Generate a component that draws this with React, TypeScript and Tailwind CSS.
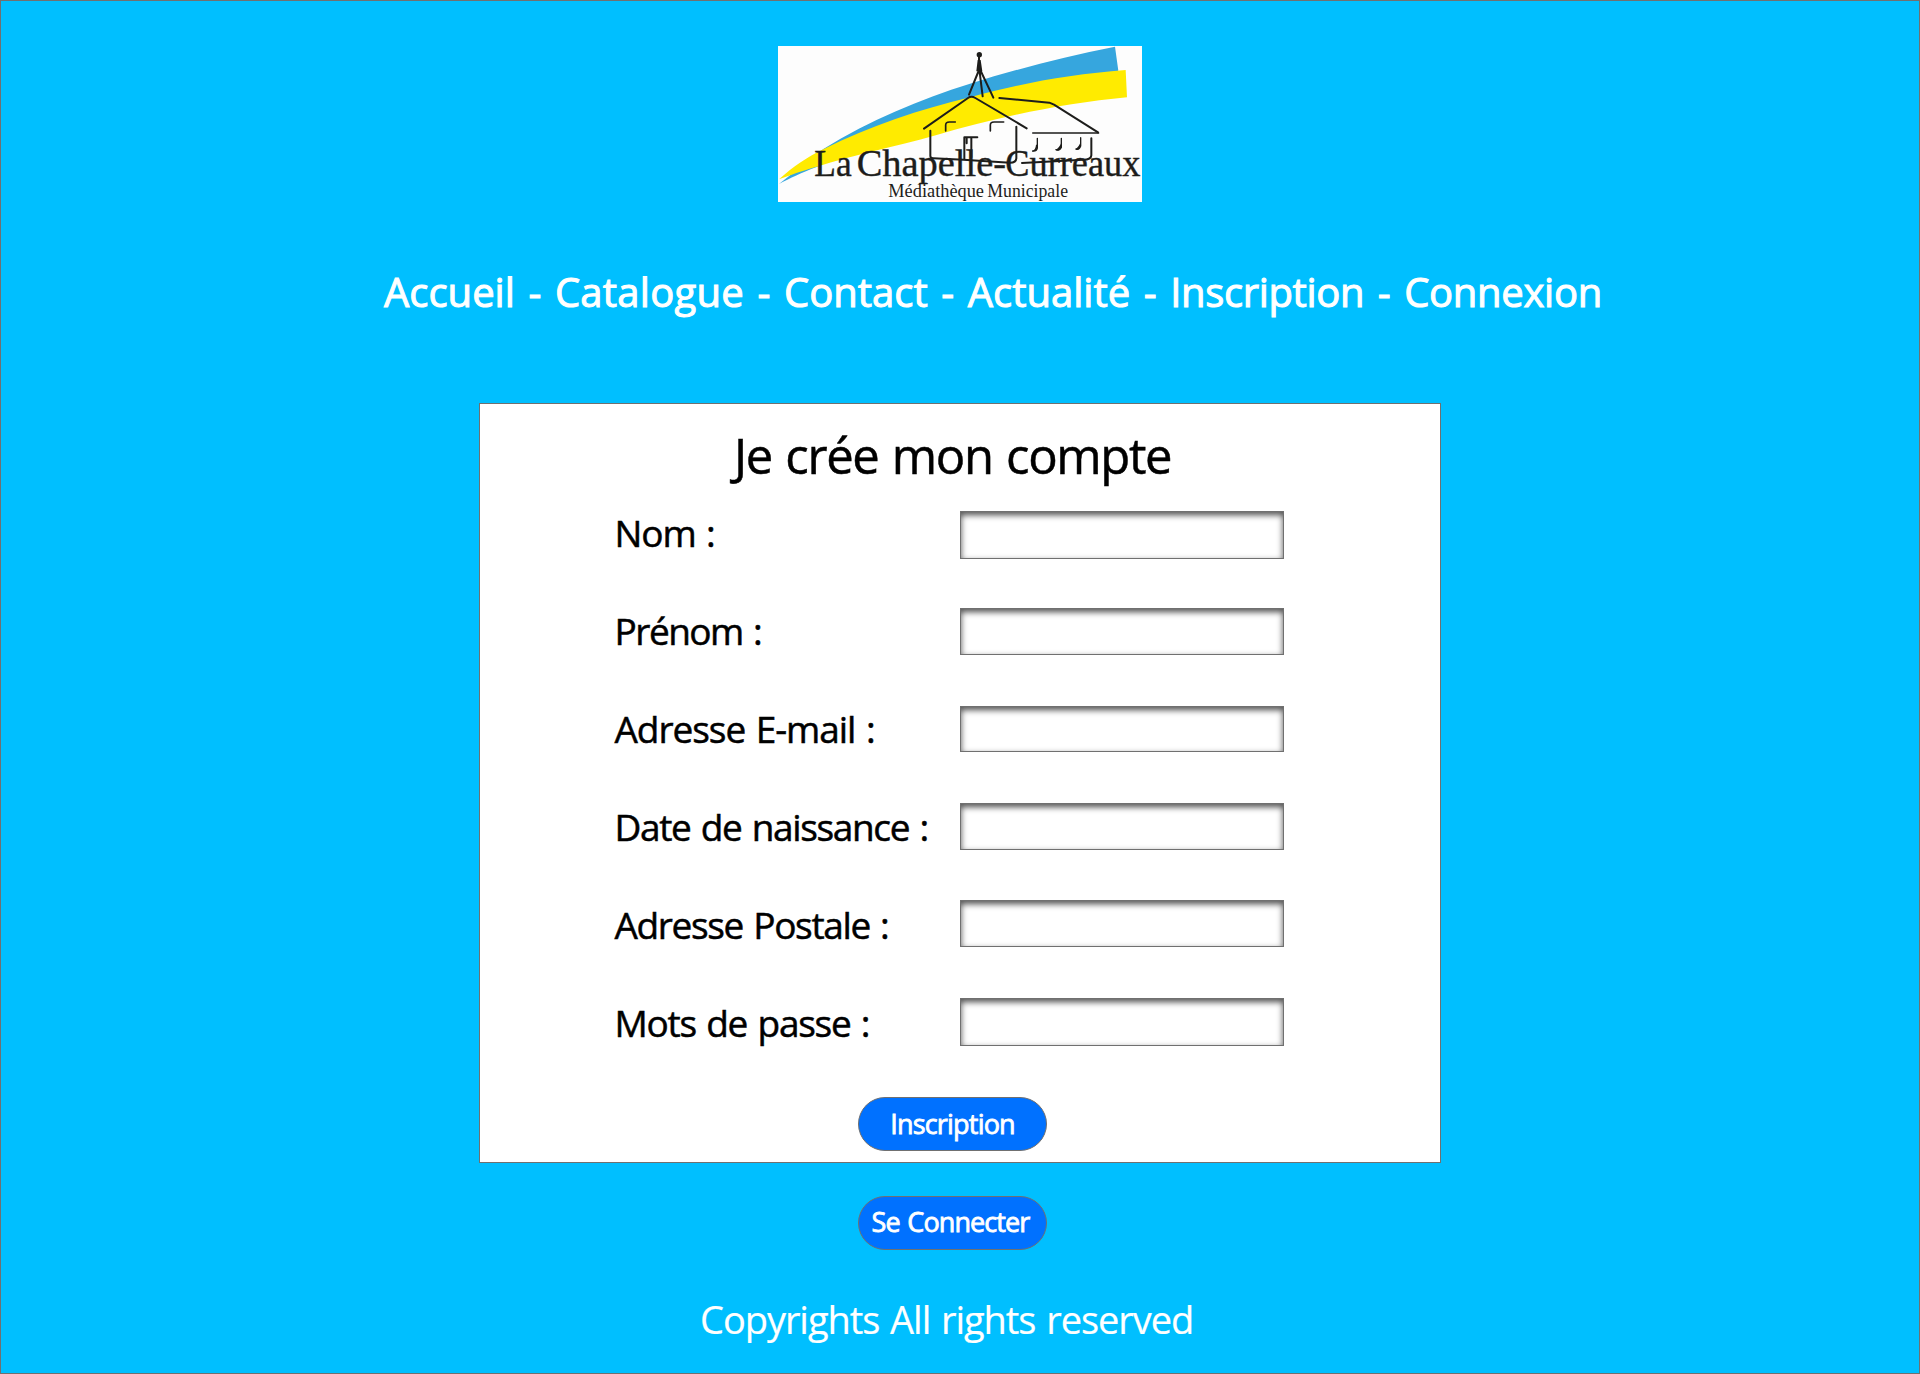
const links = [
  { label: "Accueil", track: "tracking-[0px]" },
  { label: "Catalogue", track: "tracking-[0.25px]" },
  { label: "Contact", track: "tracking-[0px]" },
  { label: "Actualité", track: "tracking-[0px]" },
  { label: "Inscription", track: "tracking-[-0.35px]" },
  { label: "Connexion", track: "tracking-[-0.3px]" },
];

const fields = [
  { label: "Nom :", size: "h-[48px] mb-[49px]", track: "tracking-[-1.1px] [word-spacing:2px]" },
  { label: "Prénom :", size: "h-[47px] mb-[51px]", track: "tracking-[-1.5px] [word-spacing:2px]" },
  { label: "Adresse E-mail :", size: "h-[46px] mb-[51px]", track: "tracking-[-1.05px] [word-spacing:2px]" },
  { label: "Date de naissance :", size: "h-[47px] mb-[50px]", track: "tracking-[-1.35px] [word-spacing:2px]" },
  { label: "Adresse Postale :", size: "h-[47px] mb-[51px]", track: "tracking-[-1.35px] [word-spacing:2px]" },
  { label: "Mots de passe :", size: "h-[48px]", track: "tracking-[-1.25px] [word-spacing:2px]" },
];

function Logo() {
  return (
    <svg width="364" height="156" viewBox="24 18 1092 468" className="block overflow-visible bg-[#fdfdfd]">
      <path d="M27 432 L160 327 C300 240 450 178 600 131 C740 88 880 50 1035 20 L1045 92 L400 260 L140 381 C95 398 60 415 27 432Z" fill="#36a6de" />
      <path d="M27 418 C70 380 110 352 160 328 C300 258 450 208 600 172 C750 130 900 103 1067 90 L1071 172 C880 190 680 232 500 285 C370 322 250 345 140 380 C95 393 60 405 27 418Z" fill="#ffeb00" />
      <g fill="none" stroke="#1d1d1b" strokeWidth="6" strokeLinecap="round" strokeLinejoin="round">
        <path d="M627 44 V90 L597 164 M628 88 L638 169 M628 84 L670 173" />
        <path d="M462 266 L594 174 Q604 167 616 174 L770 265" />
        <path d="M688 174 L838 188 L852 194 L984 277" />
        <path d="M788 279 H986" strokeWidth="4" />
        <path d="M481 272 V348 Q481 355 490 355 L580 359 L720 368 Q738 368 739 355 V260" />
        <path d="M756 369 L940 359 Q963 359 964 346 V295" />
        <path d="M527 273 V255 Q527 246 538 246 H556 M661 273 V255 Q661 246 672 246 H701" strokeWidth="5" />
        <path d="M583 357 V292 H622 M604 352 V294 M590 293 V310" strokeWidth="6" />
        <path d="M802 295 V324 Q800 334 788 333 M874 295 V322 Q868 334 858 329 M932 293 V318 Q928 330 918 327" strokeWidth="4" />
      </g>
      <circle cx="628" cy="44" r="8" fill="#1d1d1b" />
      <path d="M623 60 L632 60 L637 94 L619 94Z M802 314 Q802 336 786 334 Q797 330 798 314Z M875 306 Q878 337 856 330 Q868 324 875 306Z M932 306 Q934 333 916 328 Q926 322 932 306Z" fill="#1d1d1b" />
      <g fill="#1d1d1b" fontFamily="'Liberation Serif', serif">
        <g fontSize="114" stroke="#1d1d1b" strokeWidth="1.2">
          <text x="133" y="408" textLength="112" lengthAdjust="spacingAndGlyphs">La</text>
          <text x="260" y="408" textLength="448" lengthAdjust="spacingAndGlyphs">Chapelle-</text>
          <text x="706" y="408" textLength="405" lengthAdjust="spacingAndGlyphs">Curreaux</text>
        </g>
        <g fontSize="54">
          <text x="355" y="472" textLength="287" lengthAdjust="spacingAndGlyphs">Médiathèque</text>
          <text x="652" y="472" textLength="242" lengthAdjust="spacingAndGlyphs">Municipale</text>
        </g>
      </g>
    </svg>
  );
}

export default function App() {
  return (
    <main className="flex h-[1374px] w-[1920px] flex-col border border-[#707070] bg-[#00bfff] font-['Open_Sans',sans-serif]">
      <header className="mt-[45px] flex justify-center"><Logo /></header>
      <nav className="mt-[60px] ml-[383px] h-[60px] text-[40px] leading-[60px] [word-spacing:3.2px] whitespace-nowrap text-white [-webkit-text-stroke:1px_white]">
        {links.map((link, i) => (
          <span key={link.label}>
            {i > 0 && " - "}
            <a className={link.track}>{link.label}</a>
          </span>
        ))}
      </nav>
      <section className="mt-[81px] ml-[478px] flex h-[760px] w-[962px] flex-col border border-[#707070] bg-white text-black">
        <h1 className="mt-[16px] ml-[254px] h-[70px] text-[49px] leading-[70px] tracking-[-1.35px] [word-spacing:2px] whitespace-nowrap [-webkit-text-stroke:0.5px_black]">Je crée mon compte</h1>
        <div className="mt-[21px] flex h-[535px]">
          <div className="-mt-[2px] ml-[134.5px] w-[345.5px]">
            {fields.map((f) => (
              <label key={f.label} className={"block h-[98px] text-[37px] leading-[48px] whitespace-nowrap [-webkit-text-stroke:0.5px_black] " + f.track}>{f.label}</label>
            ))}
          </div>
          <div>
            {fields.map((f) => (
              <input key={f.label} aria-label={f.label} className={"block w-[324px] border border-[#707070] bg-white shadow-[inset_0_3px_6px_rgba(0,0,0,0.7)] " + f.size} />
            ))}
          </div>
        </div>
        <button className="mt-[51px] ml-[378px] h-[54px] w-[189px] rounded-full border border-[#707070] bg-[#0071ff] text-[27px] leading-[50px] tracking-[-0.8px] text-white [-webkit-text-stroke:0.8px_white]">Inscription</button>
      </section>
      <button className="mt-[33px] ml-[857px] h-[54px] w-[189px] rounded-full border border-[#707070] bg-[#0071ff] pr-[4px] pb-[2px] text-[27px] leading-[50px] tracking-[-0.9px] [word-spacing:1.5px] whitespace-nowrap text-white [-webkit-text-stroke:0.8px_white]">Se Connecter</button>
      <footer className="mt-[39px] ml-[699px] h-[60px] text-[38px] leading-[60px] tracking-[-1.05px] [word-spacing:2px] whitespace-nowrap text-white [-webkit-text-stroke:0.2px_white]">Copyrights All rights reserved</footer>
    </main>
  );
}
